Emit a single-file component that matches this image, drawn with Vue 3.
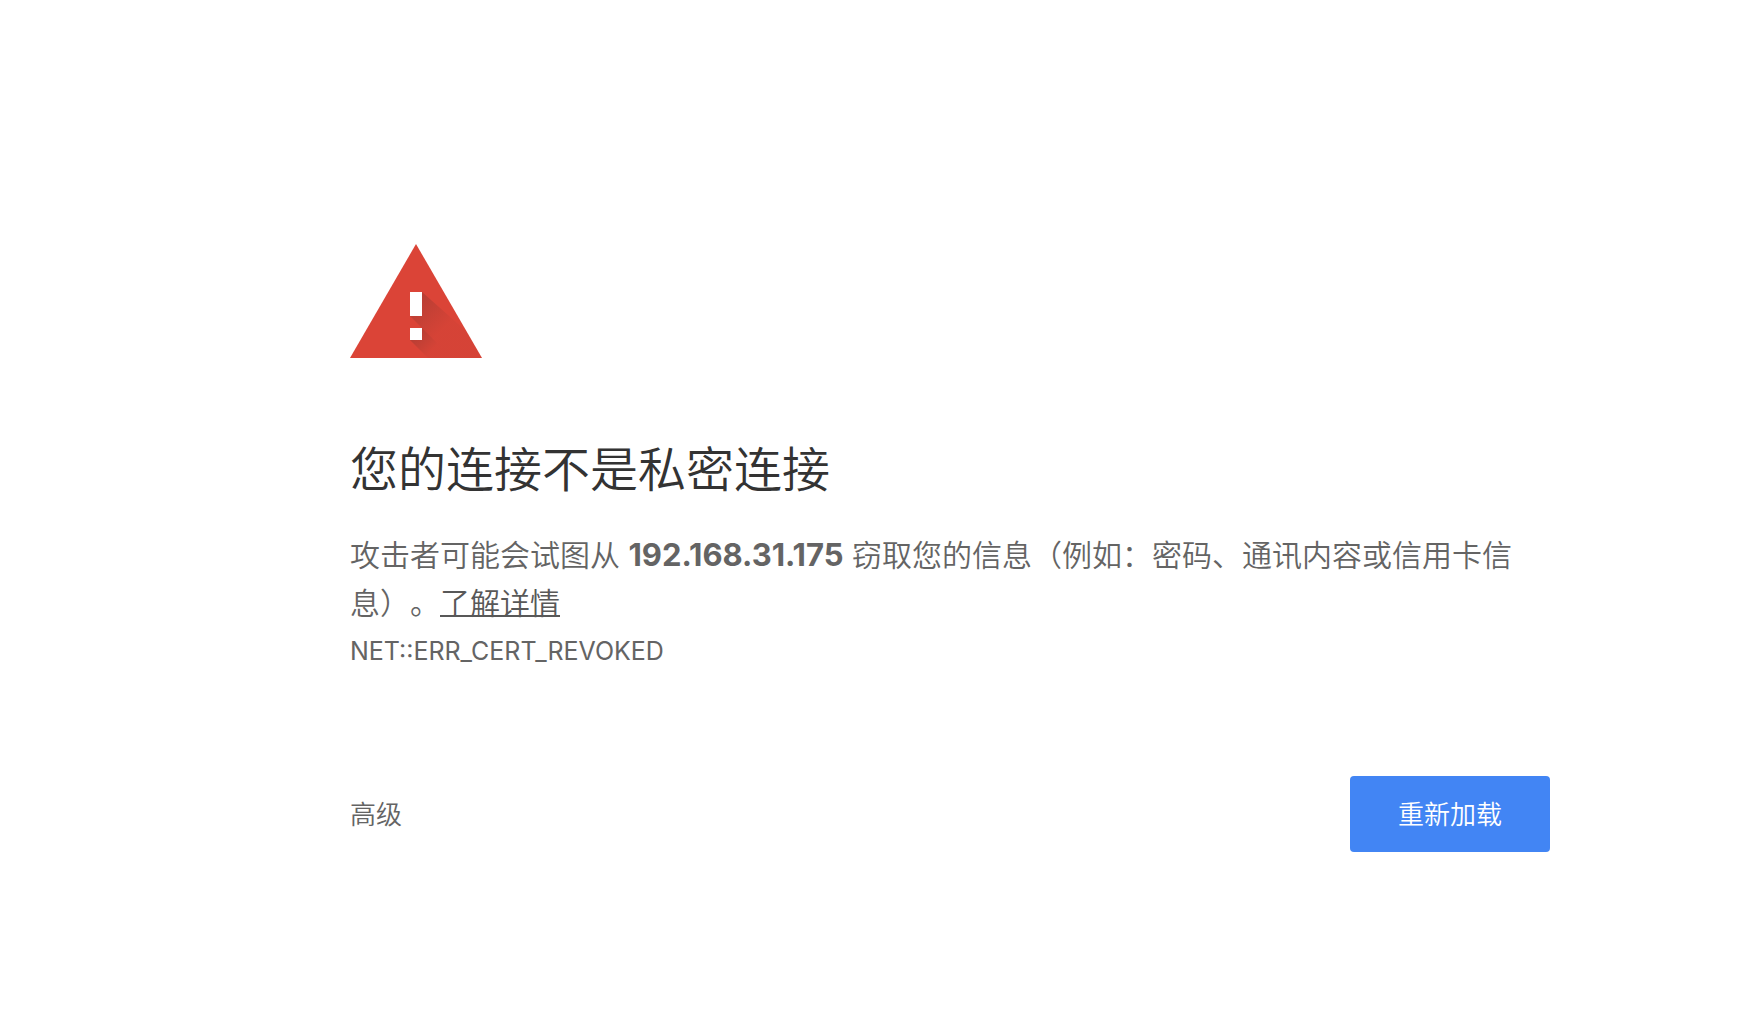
<script setup>
const host = '192.168.31.175'
const errorCode = 'NET::ERR_CERT_REVOKED'
const reload = () => window.location.reload()
</script>

<template>
  <main class="interstitial" lang="zh-CN">
    <svg class="icon" viewBox="0 0 132 114" width="132" height="114" aria-hidden="true">
      <defs>
        <linearGradient id="bar-shadow" gradientUnits="userSpaceOnUse" x1="62" y1="56" x2="92" y2="86">
          <stop offset="0" stop-color="#262626" stop-opacity="0.2" />
          <stop offset="1" stop-color="#262626" stop-opacity="0.03" />
        </linearGradient>
        <linearGradient id="dot-shadow" gradientUnits="userSpaceOnUse" x1="66" y1="90" x2="82" y2="106">
          <stop offset="0" stop-color="#262626" stop-opacity="0.2" />
          <stop offset="1" stop-color="#262626" stop-opacity="0.03" />
        </linearGradient>
      </defs>
      <path d="M66 0 132 114H0z" fill="#db4437" />
      <path d="M72 48 116 87 132 114H102L60 72H72z" fill="url(#bar-shadow)" />
      <path d="M72 84 102 114H78L60 96H72z" fill="url(#dot-shadow)" />
      <path d="M60 48h12v24H60zM60 84h12v12H60z" fill="#fff" />
    </svg>
    <h1>您的连接不是私密连接</h1>
    <p class="message">
      攻击者可能会试图从 <strong>{{ host }}</strong> 窃取您的信息（例如：密码、通讯内容或信用卡信息）。<a href="#">了解详情</a>
    </p>
    <div class="code">{{ errorCode }}</div>
    <div class="actions">
      <button class="advanced" type="button">高级</button>
      <button class="reload" type="button" @click="reload">重新加载</button>
    </div>
  </main>
</template>

<style>
body {
  margin: 0;
  background: #fff;
}
</style>

<style scoped>
.interstitial {
  padding: 244px 214px 0 350px;
  color: #646464;
  font-family: Inter, "Noto Sans CJK SC", sans-serif;
  font-size: 30px;
  font-weight: 350;
  line-height: 48px;
  text-spacing-trim: space-all;
}

.icon {
  display: block;
}

h1 {
  margin: 82px 0 31px;
  color: #333;
  font-size: 48px;
  font-weight: 350;
  line-height: 60px;
}

.message {
  margin: 0;
}

.message strong {
  font-size: 31px;
  font-weight: 700;
  line-height: 30px;
}

.message a {
  color: #585858;
  text-decoration: underline;
  text-decoration-thickness: 2px;
  text-decoration-skip-ink: none;
}

.code {
  font-size: 25px;
  font-weight: 400;
}

.actions {
  display: flex;
  justify-content: space-between;
  align-items: center;
  margin-top: 101px;
}

button {
  border: 0;
  font-family: inherit;
  font-size: 26px;
  font-weight: 350;
  line-height: 36px;
  cursor: pointer;
}

.advanced {
  padding: 21px 0 19px;
  background: none;
  color: #646464;
}

.reload {
  padding: 21px 48px 19px;
  border-radius: 4px;
  background: #4285f4;
  color: #fff;
}
</style>
